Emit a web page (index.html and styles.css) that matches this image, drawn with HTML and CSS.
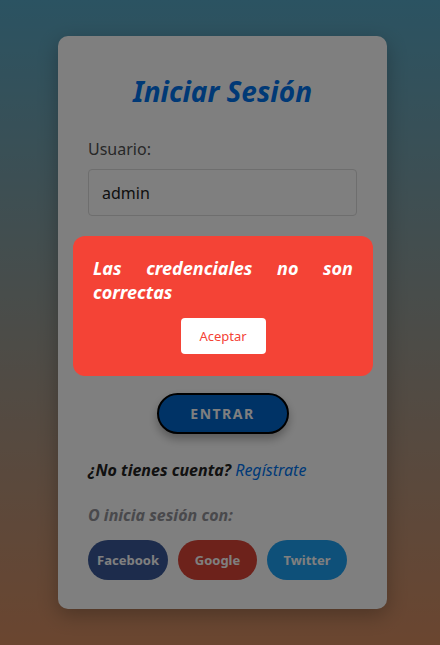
FILE: index.html
```html
<!DOCTYPE html>
<html lang="es">
<head>
<meta charset="utf-8">
<title>Iniciar Sesión</title>
<link rel="stylesheet" href="styles.css">
</head>
<body>
<div class="page">
  <div class="card">
    <h2 class="title">Iniciar Sesión</h2>
    <div class="group">
      <label class="label">Usuario:</label>
      <div class="input">admin</div>
    </div>
    <div class="actions">
      <button class="enter">ENTRAR</button>
    </div>
    <p class="register"><b>¿No tienes cuenta?</b> <a class="link">Regístrate</a></p>
    <p class="alt">O inicia sesión con:</p>
    <div class="socials">
      <button class="social fb">Facebook</button>
      <button class="social gg">Google</button>
      <button class="social tw">Twitter</button>
    </div>
  </div>
</div>
<div class="overlay"></div>
<div class="modal">
  <p class="modal-text">Las credenciales no son correctas</p>
  <div class="modal-actions">
    <button class="accept">Aceptar</button>
  </div>
</div>
</body>
</html>
```
FILE: styles.css
```css
* { box-sizing: border-box; }
html, body { margin: 0; height: 100%; }
body {
  font-family: "Noto Sans", "Open Sans", sans-serif;
  background: linear-gradient(to bottom, #56a6c4, #d68c60);
  overflow: hidden;
}
.page {
  height: 645px;
  display: flex;
  align-items: center;
  justify-content: center;
  padding-left: 5px;
}
.card {
  width: 329px;
  height: 573px;
  background: #fff;
  border-radius: 10px;
  padding: 36px 30px 29px;
  box-shadow: 0 6px 20px rgba(0,0,0,0.25);
  display: flex;
  flex-direction: column;
}
.title {
  margin: 0 0 28px;
  text-align: center;
  font-size: 28px;
  font-weight: 700;
  font-style: italic;
  color: #0072ec;
  line-height: 38px;
}
.group { display: flex; flex-direction: column; }
.label {
  font-size: 16px;
  color: #505050;
  line-height: 22px;
  margin-bottom: 9px;
}
.input {
  height: 47px;
  border: 1px solid #dcdcdc;
  border-radius: 4px;
  padding: 0 13px;
  display: flex;
  align-items: center;
  font-size: 16px;
  color: #222;
}
.actions { display: flex; justify-content: center; margin-top: 177px; }
.enter {
  width: 132px;
  height: 41px;
  border-radius: 21px;
  border: 2px solid #000;
  background: #0066cc;
  color: #fff;
  font-family: inherit;
  font-weight: 700;
  font-size: 14px;
  letter-spacing: 1.5px;
  box-shadow: 0 5px 10px rgba(0,0,0,0.3);
}
.register {
  margin: 25px 0 0;
  font-size: 16px;
  line-height: 22px;
  font-style: italic;
  color: #222;
}
.link { color: #0074f0; font-weight: 400; }
.alt {
  margin: 23px 0 0;
  font-size: 16px;
  line-height: 22px;
  font-style: italic;
  font-weight: 700;
  color: #929299;
}
.socials { display: flex; gap: 10px; margin-top: 14px; }
.social {
  height: 40px;
  width: 80px;
  border: none;
  border-radius: 20px;
  color: #fff;
  font-family: inherit;
  font-weight: 700;
  font-size: 13px;
  padding: 0;
}
.fb { background: #3b5998; }
.gg { background: #db4437; width: 79px; }
.tw { background: #1da1f2; }
.overlay {
  position: fixed;
  inset: 0;
  background: rgba(0,0,0,0.5);
}
.modal {
  position: fixed;
  left: 73px;
  top: 236px;
  width: 300px;
  height: 140px;
  background: #f44336;
  border-radius: 12px;
  padding: 20px 20px 22px;
  display: flex;
  flex-direction: column;
}
.modal-text {
  margin: 0;
  color: #fff;
  font-size: 18px;
  line-height: 24px;
  font-weight: 700;
  font-style: italic;
  text-align: justify;
}
.modal-actions { display: flex; justify-content: center; margin-top: auto; }
.accept {
  width: 85px;
  height: 36px;
  background: #fff;
  color: #f44336;
  border: none;
  border-radius: 4px;
  font-family: inherit;
  font-size: 13px;
}
```
